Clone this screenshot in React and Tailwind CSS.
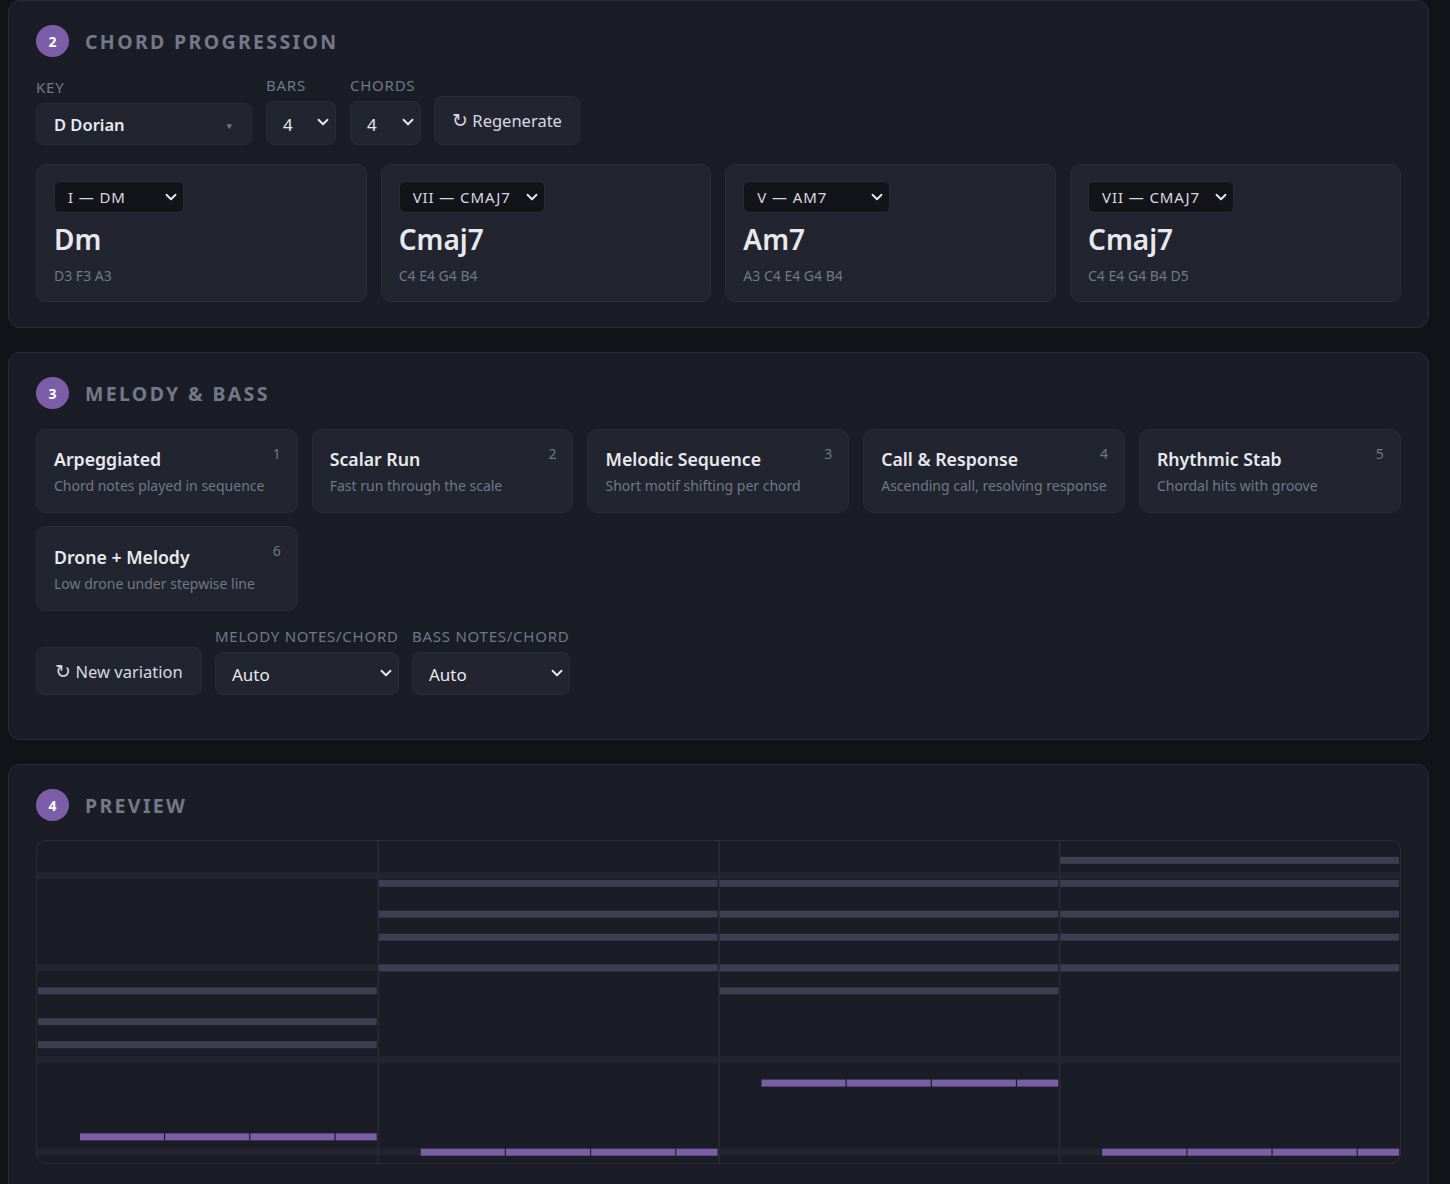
import React from "react";
import { ChevronDown } from "lucide-react";

const chords = [
    { degree: "I — DM", name: "Dm", notes: "D3 F3 A3", selectWidth: "w-[130px]" },
    { degree: "VII — CMAJ7", name: "Cmaj7", notes: "C4 E4 G4 B4", selectWidth: "w-[146px]" },
    { degree: "V — AM7", name: "Am7", notes: "A3 C4 E4 G4 B4", selectWidth: "w-[147px]" },
    { degree: "VII — CMAJ7", name: "Cmaj7", notes: "C4 E4 G4 B4 D5", selectWidth: "w-[146px]" },
];

const patterns = [
    { id: 1, name: "Arpeggiated", desc: "Chord notes played in sequence" },
    { id: 2, name: "Scalar Run", desc: "Fast run through the scale" },
    { id: 3, name: "Melodic Sequence", desc: "Short motif shifting per chord" },
    { id: 4, name: "Call & Response", desc: "Ascending call, resolving response" },
    { id: 5, name: "Rhythmic Stab", desc: "Chordal hits with groove" },
    { id: 6, name: "Drone + Melody", desc: "Low drone under stepwise line" },
];

// piano roll rows, counted from the top of the chart
const ROW = 7.68;
const BAR = 340.75;
const padRows = [4, 16, 28, 40];
const barRows = [
    [19, 23, 26],
    [5, 9, 12, 16],
    [5, 9, 12, 16, 19],
    [2, 5, 9, 12, 16],
];
const melodyRows = [38, 40, 31, 40];

function SectionHead({ n, title }) {
    return (
        <div className="flex items-center gap-4 h-8">
            <div className="w-[33px] h-8 rounded-full bg-[#7b5ea7] flex items-center justify-center text-white text-[14px] font-bold">
                {n}
            </div>
            <h2 className="text-[19.5px] leading-8 mt-[2px] font-bold tracking-[2.35px] text-[#747989] uppercase">
                {title}
            </h2>
        </div>
    );
}

function Field({ label, children, className = "" }) {
    return (
        <div className={`flex flex-col ${className}`}>
            <label className="text-[15px] leading-[19px] tracking-[0.75px] text-[#727786] uppercase mb-[6px] whitespace-nowrap">
                {label}
            </label>
            {children}
        </div>
    );
}

function Select({ value, className = "" }) {
    return (
        <div className="relative">
            <select
                defaultValue={value}
                className={`w-full appearance-none rounded-lg border border-[#2a2d38] bg-[#22252f] text-[#e8e9ee] pl-4 ${className}`}
            >
                <option>{value}</option>
            </select>
            <ChevronDown
                size={18}
                strokeWidth={2.5}
                className="absolute right-[4px] top-3 text-[#e8e9ee] pointer-events-none"
            />
        </div>
    );
}

function PianoRoll() {
    return (
        <div className="mt-[19px] h-[324px] rounded-[10px] border border-[#2a2d38] overflow-hidden">
            <svg width="1363" height="322" className="block">
                {padRows.map((r) => (
                    <rect key={r} x="0" y={r * ROW} width="1363" height="7.5" fill="#22252e" />
                ))}
                {[1, 2, 3].map((i) => (
                    <rect key={i} x={i * BAR - 0.5} y="0" width="2" height="322" fill="#262933" />
                ))}
                {barRows.map((rows, b) =>
                    rows.map((r) => (
                        <rect
                            key={`${b}-${r}`}
                            x={b * BAR + 1}
                            y={r * ROW + 0.5}
                            width={BAR - 2}
                            height="7"
                            fill="#3d3f50"
                        />
                    )),
                )}
                {melodyRows.map((r, b) =>
                    [0, 1, 2, 3].map((i) => {
                        const x = b * BAR + 43 + i * 85.2;
                        const end = Math.min(x + 84, (b + 1) * BAR - 1);
                        return (
                            <rect
                                key={`${b}-${i}`}
                                x={x}
                                y={r * ROW + 0.5}
                                width={end - x}
                                height="7"
                                fill="#7b5ea7"
                            />
                        );
                    }),
                )}
            </svg>
        </div>
    );
}

export default function App() {
    return (
        <div
            className="h-[1184px] overflow-hidden bg-[#121318] pl-2 pr-[21.3px] flex flex-col gap-6 text-[#e8e9ee]"
            style={{ fontFamily: '"Noto Sans", "Open Sans", sans-serif' }}
        >
            {/* Chord progression */}
            <section className="shrink-0 rounded-xl border border-[#2a2d38] bg-[#1a1d26] px-[27px] pt-6 pb-[25px]">
                <SectionHead n={2} title="Chord progression" />
                <div className="mt-[19px] flex items-end gap-[14px]">
                    <Field label="Key" className="w-[216px]">
                        <button className="h-[42px] rounded-lg border border-[#2a2d38] bg-[#22252f] pl-[17px] pr-[19px] pt-[3px] flex items-center justify-between text-[16.5px] font-semibold">
                            D Dorian
                            <span className="text-[9px] text-[#727786]">▾</span>
                        </button>
                    </Field>
                    <Field label="Bars" className="w-[70px]">
                        <Select value="4" className="h-[44px] pt-1 text-[17px]" />
                    </Field>
                    <Field label="Chords" className="w-[71px]">
                        <Select value="4" className="h-[44px] pt-1 text-[17px]" />
                    </Field>
                    <button className="-ml-px h-[49px] w-[146px] rounded-lg border border-[#2a2d38] bg-[#22252f] pt-[2px] text-[16.5px] text-[#d8d9e0]">
                        <span className="text-[19px] leading-none">↻</span> Regenerate
                    </button>
                </div>
                <div className="mt-[19px] grid grid-cols-4 gap-[14px]">
                    {chords.map((c, i) => (
                        <div key={i} className="h-[138px] rounded-[10px] border border-[#2a2d38] bg-[#22252f] px-[17px] pt-4">
                            <div className={`relative ${c.selectWidth}`}>
                                <select
                                    defaultValue={c.degree}
                                    className="appearance-none block h-8 w-full rounded-md border border-[#2a2d38] bg-[#13141a] pl-[13px] text-[15px] tracking-[0.9px] text-[#d8d9e0]"
                                >
                                    <option>{c.degree}</option>
                                </select>
                                <ChevronDown
                                    size={18}
                                    strokeWidth={2.5}
                                    className="absolute right-[4px] top-[7px] text-[#e8e9ee] pointer-events-none"
                                />
                            </div>
                            <div className="mt-[5px] text-[28px] leading-[42px] font-semibold">{c.name}</div>
                            <div className="mt-[6px] text-[14px] leading-5 text-[#727786]">{c.notes}</div>
                        </div>
                    ))}
                </div>
            </section>

            {/* Melody and bass */}
            <section className="shrink-0 rounded-xl border border-[#2a2d38] bg-[#1a1d26] px-[27px] pt-6 pb-11">
                <SectionHead n={3} title="Melody & bass" />
                <div className="mt-5 grid grid-cols-5 grid-rows-[84px_85px] gap-[14px] gap-y-[13px]">
                    {patterns.map((p) => (
                        <div
                            key={p.id}
                            className={`relative rounded-[10px] border border-[#2a2d38] bg-[#22252f] px-[17px] ${p.id === 6 ? "pt-[17px]" : "pt-4"}`}
                        >
                            <span className="absolute top-[13px] right-[16px] text-[14px] text-[#727786]">{p.id}</span>
                            <div className="text-[17.7px] leading-[26px] font-semibold">{p.name}</div>
                            <div className="mt-1 text-[14px] leading-5 text-[#727786]">{p.desc}</div>
                        </div>
                    ))}
                </div>
                <div className="mt-4 flex items-end gap-[13px]">
                    <button className="h-[48px] w-[166px] rounded-lg border border-[#2a2d38] bg-[#22252f] pt-[2px] text-[16.5px] text-[#d8d9e0]">
                        <span className="text-[19px] leading-none">↻</span> New variation
                    </button>
                    <Field label="Melody notes/chord" className="w-[184px]">
                        <Select value="Auto" className="h-[43px] pt-[2px] text-[17px]" />
                    </Field>
                    <Field label="Bass notes/chord" className="w-[158px]">
                        <Select value="Auto" className="h-[43px] pt-[2px] text-[17px]" />
                    </Field>
                </div>
            </section>

            {/* Preview */}
            <section className="shrink-0 rounded-xl border border-[#2a2d38] bg-[#1a1d26] px-[27px] pt-6 pb-10">
                <SectionHead n={4} title="Preview" />
                <PianoRoll />
            </section>
        </div>
    );
}
